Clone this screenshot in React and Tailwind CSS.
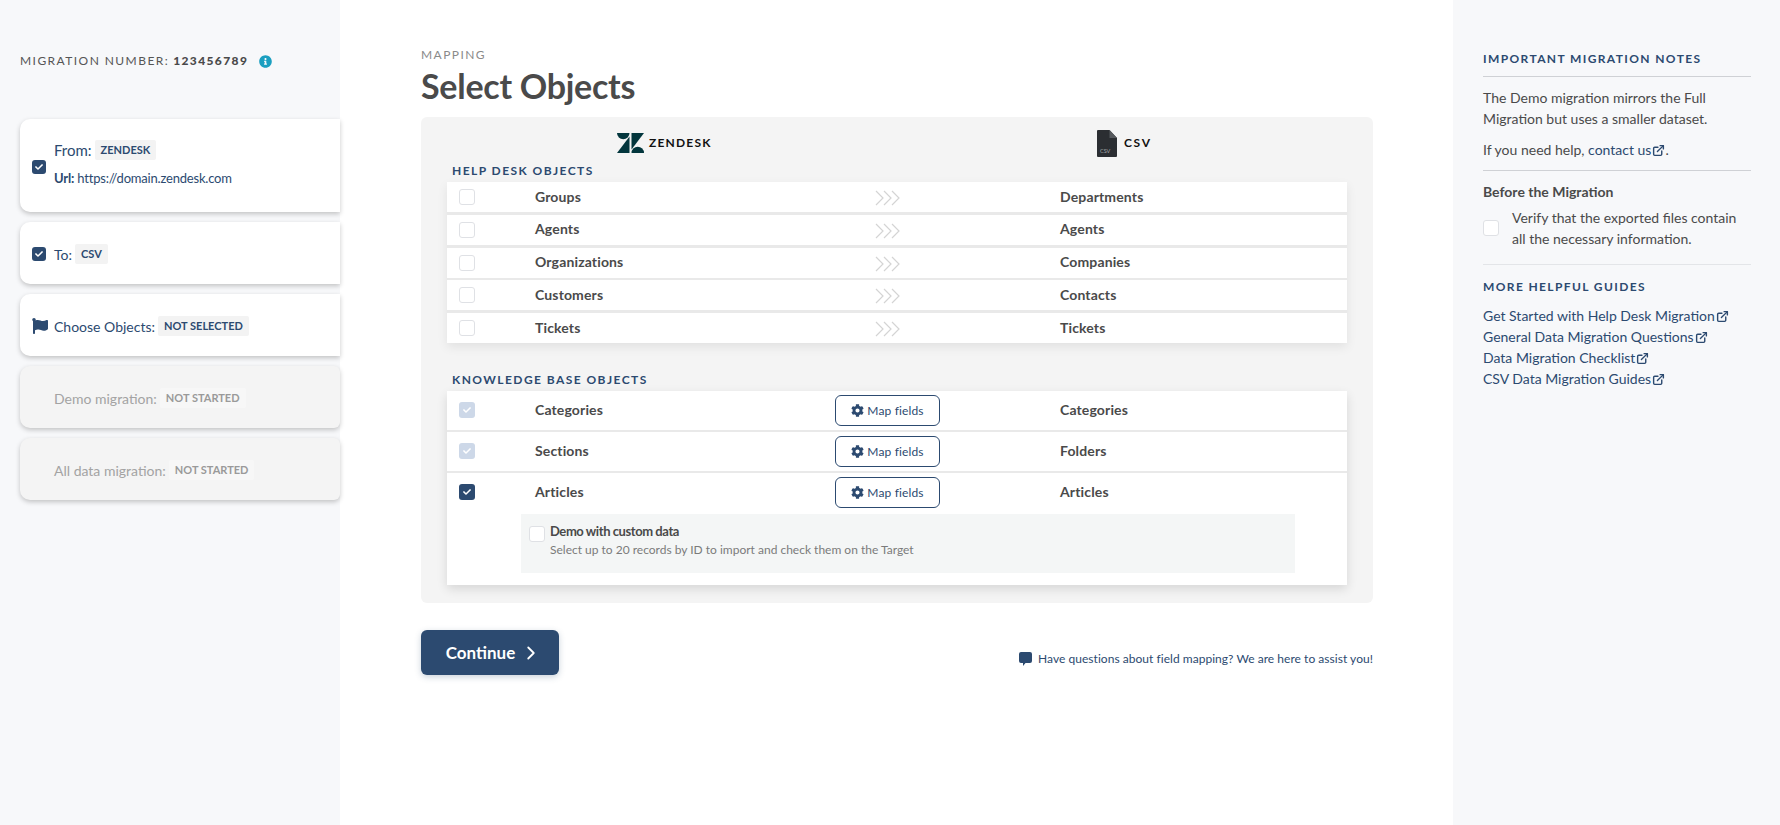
import { ChevronRight, ExternalLink } from "lucide-react";
import { FaCheck, FaCog, FaFlag, FaInfoCircle } from "react-icons/fa";

const helpDeskRows = [
  ["Groups", "Departments"],
  ["Agents", "Agents"],
  ["Organizations", "Companies"],
  ["Customers", "Contacts"],
  ["Tickets", "Tickets"],
];

const guides = [
  "Get Started with Help Desk Migration",
  "General Data Migration Questions",
  "Data Migration Checklist",
  "CSV Data Migration Guides",
];

const Checkbox = ({ state = "empty" }) => {
  if (state === "small") {
    return (
      <span className="flex h-[14px] w-[14px] shrink-0 items-center justify-center rounded-[3px] bg-[#2c4a70] text-white">
        <FaCheck size={8} />
      </span>
    );
  }
  if (state === "checked") {
    return (
      <span className="flex h-[16px] w-[16px] shrink-0 items-center justify-center rounded-[3px] bg-[#2c4a70] text-white">
        <FaCheck size={8} />
      </span>
    );
  }
  if (state === "disabled") {
    return (
      <span className="flex h-[16px] w-[16px] shrink-0 items-center justify-center rounded-[3px] bg-[#cdd8e8] text-white">
        <FaCheck size={8} />
      </span>
    );
  }
  return (
    <span className="block h-[16px] w-[16px] shrink-0 rounded-[3px] border border-[#dfe1e5] bg-white" />
  );
};

const Tag = ({ children, muted }) => (
  <span
    className={`ml-[3px] rounded-[2px] px-[6px] py-[2px] text-[11px] font-bold leading-[16px] ${
      muted ? "bg-[#f7f7f7] text-[#9a9a9a]" : "bg-[#f3f3f3] text-[#2c4a70]"
    }`}
  >
    {children}
  </span>
);

const Chevrons = () => (
  <svg width="25" height="16" viewBox="0 0 25 16" fill="none" stroke="#d4d4d4" strokeWidth="1.2">
    <path d="M1 1l7 7-7 7M9 1l7 7-7 7M17 1l7 7-7 7" />
  </svg>
);

const ZendeskLogo = () => (
  <svg width="27" height="20" viewBox="0 0 27 20" fill="#03363d">
    <path d="M0 0h12.5a6.25 6.25 0 0 1-12.5 0z" />
    <path d="M12.5 3.5V20H0z" />
    <path d="M14.5 16.5V0H27z" />
    <path d="M14.5 20a6.25 6.25 0 0 1 12.5 0z" />
  </svg>
);

const CsvFile = () => (
  <svg width="20" height="27" viewBox="0 0 20 27">
    <path d="M1 0h11.5L20 8v18a1 1 0 0 1-1 1H1a1 1 0 0 1-1-1V1a1 1 0 0 1 1-1z" fill="#2b2e32" />
    <path d="M12.5 0L20 8h-7.5z" fill="#55585c" />
    <text x="3" y="23" fontSize="5.5" fill="#a8aaad" fontFamily="Lato, sans-serif">
      CSV
    </text>
  </svg>
);

const Bubble = () => (
  <svg width="13" height="14" viewBox="0 0 13 14" fill="#2c4a70">
    <path d="M2 0h9a2 2 0 0 1 2 2v7a2 2 0 0 1-2 2H6.5L4 14v-3H2a2 2 0 0 1-2-2V2a2 2 0 0 1 2-2z" />
  </svg>
);

const OutLink = () => (
  <ExternalLink size={13} strokeWidth={2.6} className="ml-[1px] inline-block align-[-2px] text-[#2c4a70]" />
);

const MapButton = () => (
  <button className="flex h-[31px] w-[105px] items-center justify-center gap-[3px] rounded-[6px] border border-[#2c4a70] bg-white text-[12px] font-normal text-[#2c4a70]">
    <FaCog size={13} />
    Map fields
  </button>
);

const StepCard = ({ children, muted, className }) => (
  <div
    className={`flex items-center rounded-l-[10px] text-[14px] shadow-[0_2px_5px_rgba(0,0,0,0.22)] ${
      muted ? "rounded-r-[6px] bg-[#f4f4f4] text-[#a3a3a3]" : "bg-white text-[#2c4a70]"
    } ${className}`}
  >
    {children}
  </div>
);

const KbRow = ({ source, target, checkbox }) => (
  <div className="flex h-[39px] items-center bg-white pl-[12px] text-[14px] font-bold tracking-[0.01em]">
    <span className="mb-[2px]">
      <Checkbox state={checkbox} />
    </span>
    <span className="mb-[2px] ml-[60px] w-[300px]">{source}</span>
    <span className="w-[225px]">
      <MapButton />
    </span>
    <span className="mb-[2px]">{target}</span>
  </div>
);

const App = () => {
  return (
    <div className="flex h-[825px] overflow-hidden bg-white font-['Lato',sans-serif] text-[#4a4a4a]">
      {/* left steps */}
      <aside className="w-[340px] shrink-0 bg-[#f7f8fa] pl-[20px] pt-[53px]">
        <div className="flex h-[16px] items-center text-[12px] tracking-[0.12em] text-[#555]">
          MIGRATION NUMBER:
          <b className="ml-[4px] font-black tracking-[0.115em] text-[#4a4a4a]">123456789</b>
          <FaInfoCircle size={13} className="ml-[11px] text-[#1b9fc0]" />
        </div>
        <div className="mt-[50px] flex flex-col gap-[10px]">
          <StepCard className="h-[93px] pb-[4px] pl-[12px]">
            <span className="mt-[7px]">
              <Checkbox state="small" />
            </span>
            <div className="ml-[8px]">
              <div className="flex items-center text-[15px] leading-[20px]">
                From:
                <Tag>ZENDESK</Tag>
              </div>
              <div className="mt-[8px] text-[13px] leading-[20px] tracking-[-0.015em]">
                <b>Url:</b> https://domain.zendesk.com
              </div>
            </div>
          </StepCard>
          <StepCard className="h-[62px] pl-[12px] pt-[2px]">
            <Checkbox state="small" />
            <span className="ml-[8px]">To:</span>
            <Tag>CSV</Tag>
          </StepCard>
          <StepCard className="h-[62px] pl-[12px] pt-[2px]">
            <FaFlag size={16} className="w-[16px] shrink-0" />
            <span className="ml-[6px]">Choose Objects:</span>
            <Tag>NOT SELECTED</Tag>
          </StepCard>
          <StepCard muted className="h-[62px] pl-[34px] pt-[2px]">
            <span>Demo migration:</span>
            <Tag muted>NOT STARTED</Tag>
          </StepCard>
          <StepCard muted className="h-[62px] pl-[34px] pt-[2px]">
            <span>All data migration:</span>
            <Tag muted>NOT STARTED</Tag>
          </StepCard>
        </div>
      </aside>

      {/* main column */}
      <main className="w-[1113px] shrink-0 pl-[81px] pt-[47px]">
        <div className="w-[952px]">
          <div className="text-[12px] leading-[16px] tracking-[0.12em] text-[#8a8a8a]">MAPPING</div>
          <h1 className="mt-[2px] text-[34px] font-bold leading-[42px] tracking-[-0.008em] text-[#4a4a4a]">
            Select Objects
          </h1>
          <div className="mt-[10px] h-[486px] rounded-[6px] bg-[#f4f4f4] pt-[13px]">
            <div className="flex h-[26px]">
              <div className="flex w-[676px] items-center pl-[196px]">
                <ZendeskLogo />
                <span className="ml-[5px] text-[12px] font-bold tracking-[0.1em] text-[#111]">ZENDESK</span>
              </div>
              <div className="flex items-center">
                <CsvFile />
                <span className="ml-[7px] text-[12px] font-bold tracking-[0.14em] text-[#111]">CSV</span>
              </div>
            </div>

            <div className="mx-[26px]">
              <div className="mt-[8px] pl-[5px] text-[12px] font-bold leading-[14px] tracking-[0.12em] text-[#2c4a70]">
                HELP DESK OBJECTS
              </div>
              <div className="mt-[4px] flex flex-col gap-[2.75px] bg-[#e9e9e9] shadow-[0_4px_10px_rgba(0,0,0,0.08)]">
                {helpDeskRows.map(([source, target]) => (
                  <div
                    key={source}
                    className="flex h-[30px] items-center bg-white pl-[12px] text-[14px] font-bold tracking-[0.01em]"
                  >
                    <Checkbox />
                    <span className="mb-[2px] ml-[60px] w-[340px]">{source}</span>
                    <span className="mt-[2px] flex w-[185px]">
                      <Chevrons />
                    </span>
                    <span className="mb-[2px]">{target}</span>
                  </div>
                ))}
              </div>

              <div className="mt-[30px] pl-[5px] text-[12px] font-bold leading-[14px] tracking-[0.12em] text-[#2c4a70]">
                KNOWLEDGE BASE OBJECTS
              </div>
              <div className="mt-[4px] flex flex-col gap-[2px] bg-[#e9e9e9] shadow-[0_4px_10px_rgba(0,0,0,0.12)]">
                <KbRow source="Categories" target="Categories" checkbox="disabled" />
                <KbRow source="Sections" target="Folders" checkbox="disabled" />
                <div className="h-[112px] bg-white">
                  <KbRow source="Articles" target="Articles" checkbox="checked" />
                  <div className="ml-[74px] mt-[2px] flex h-[59px] w-[774px] bg-[#f4f6f6] pl-[8px] pt-[9px]">
                    <span className="mt-[3px]">
                      <Checkbox />
                    </span>
                    <div className="ml-[5px]">
                      <div className="text-[13px] font-bold leading-[16px] tracking-[-0.033em]">Demo with custom data</div>
                      <div className="mt-[3px] text-[12px] leading-[16px] text-[#7b7b7b]">
                        Select up to 20 records by ID to import and check them on the Target
                      </div>
                    </div>
                  </div>
                </div>
              </div>
            </div>
          </div>

          <div className="mt-[27px] flex items-start justify-between">
            <button className="flex h-[45px] w-[138px] items-center justify-center gap-[5px] rounded-[6px] bg-[#2c4a70] pl-[8px] text-[17px] font-bold text-white shadow-[0_2px_6px_rgba(44,74,112,0.25)]">
              Continue
              <ChevronRight size={22} />
            </button>
            <div className="mt-[20px] flex items-center gap-[6px] text-[12px] leading-[18px] tracking-[0.003em] text-[#2c4a70]">
              <Bubble />
              Have questions about field mapping? We are here to assist you!
            </div>
          </div>
        </div>
      </main>

      {/* right notes */}
      <aside className="flex-1 bg-[#f7f8fa] pl-[30px] pr-[29px] pt-[51px]">
        <div className="text-[12px] font-bold leading-[16px] tracking-[0.115em] text-[#2c4a70]">IMPORTANT MIGRATION NOTES</div>
        <div className="mt-[9px] border-t border-[#cfd1d5] pt-[10px] text-[14px] leading-[21px]">
          <p>The Demo migration mirrors the Full Migration but uses a smaller dataset.</p>
          <p className="mt-[10px]">
            If you need help, <span className="text-[#2c4a70]">contact us</span>
            <OutLink />.
          </p>
        </div>
        <div className="mt-[10px] border-t border-[#cfd1d5] pt-[10px] text-[14px] leading-[21px]">
          <div className="font-bold">Before the Migration</div>
          <div className="mt-[5px] flex items-center">
            <Checkbox />
            <p className="ml-[13px]">Verify that the exported files contain all the necessary information.</p>
          </div>
        </div>
        <div className="mt-[15px] border-t border-[#e3e5e8] pt-[14px]">
          <div className="text-[12px] font-bold leading-[16px] tracking-[0.115em] text-[#2c4a70]">MORE HELPFUL GUIDES</div>
          <div className="mt-[10px] flex flex-col text-[14px] leading-[21px] text-[#2c4a70]">
            {guides.map((guide) => (
              <div key={guide}>
                {guide}
                <OutLink />
              </div>
            ))}
          </div>
        </div>
      </aside>
    </div>
  );
};

export default App;
